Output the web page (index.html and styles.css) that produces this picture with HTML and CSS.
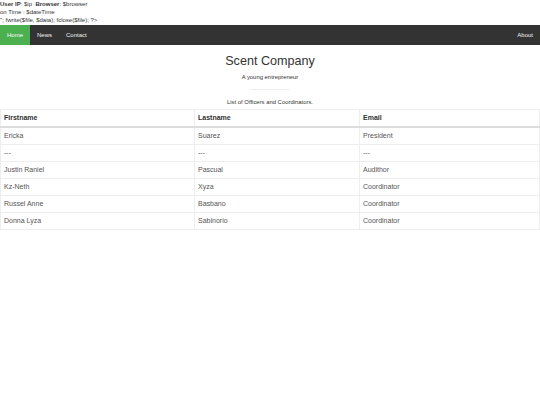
FILE: index.html
```html
<!DOCTYPE html>
<html>
<head>
<meta charset="utf-8">
<link rel="stylesheet" href="styles.css">
</head>
<body>
<div class="log">
<div><b>User IP</b>: $ip &nbsp;<b>Browser</b>: $browser</div>
<div>on Time : $dateTime</div>
<div>"; fwrite($file, $data); fclose($file); ?&gt;</div>
</div>
<nav class="topnav">
<a class="active" href="#">Home</a>
<a href="#">News</a>
<a href="#">Contact</a>
<a class="right" href="#">About</a>
</nav>
<header class="hero">
<h2 class="title">Scent Company</h2>
<p class="sub">A young entrepreneur</p>
<hr class="rule">
<p class="caption">List of Officers and Coordinators.</p>
</header>
<table class="grid">
<thead>
<tr><th class="c1">Firstname</th><th class="c2">Lastname</th><th>Email</th></tr>
</thead>
<tbody>
<tr><td>Ericka</td><td>Suarez</td><td>President</td></tr>
<tr><td>---</td><td>---</td><td>---</td></tr>
<tr><td>Justin Raniel</td><td>Pascual</td><td>Audithor</td></tr>
<tr><td>Kz-Neth</td><td>Xyza</td><td>Coordinator</td></tr>
<tr><td>Russel Anne</td><td>Basbano</td><td>Coordinator</td></tr>
<tr><td>Donna Lyza</td><td>Sabinorio</td><td>Coordinator</td></tr>
</tbody>
</table>
</body>
</html>
```
FILE: styles.css
```css
html, body { margin: 0; padding: 0; background: #fff; }
body { font-family: "Liberation Sans", Arial, sans-serif; color: #333; }
.log { font-size: 6px; line-height: 8px; color: #333; height: 25px; }
.log b { font-weight: bold; }
.topnav { display: flex; background: #333; height: 20px; }
.topnav a { display: block; color: #f2f2f2; text-decoration: none; font-size: 6px; line-height: 20px; padding: 0 7px; }
.topnav a.active { background: #4CAF50; color: #fff; }
.topnav a.right { margin-left: auto; }
.hero { text-align: center; padding-top: 8px; }
.title { font-size: 12.6px; font-weight: normal; margin: 0; line-height: 16px; }
.sub { font-size: 5.9px; margin: 0; line-height: 8px; padding-top: 4px; }
.rule { width: 40px; margin: 8px auto 0; border: 0; border-top: 1px solid #eee; height: 0; }
.caption { font-size: 5.9px; margin: 0; line-height: 8px; padding-top: 8px; height: 11px; }
.grid { width: 100%; border-collapse: collapse; font-size: 7px; border: 1px solid #ddd; }
.grid th, .grid td { text-align: left; padding: 0 3px; height: 16px; line-height: 8px; border: 1px solid #eee; }
.grid th { font-weight: bold; color: #333; border-bottom: 2px solid #ddd; }
.grid td { color: #555; }
.grid th.c1 { width: 187px; }
.grid th.c2 { width: 158px; }
```
